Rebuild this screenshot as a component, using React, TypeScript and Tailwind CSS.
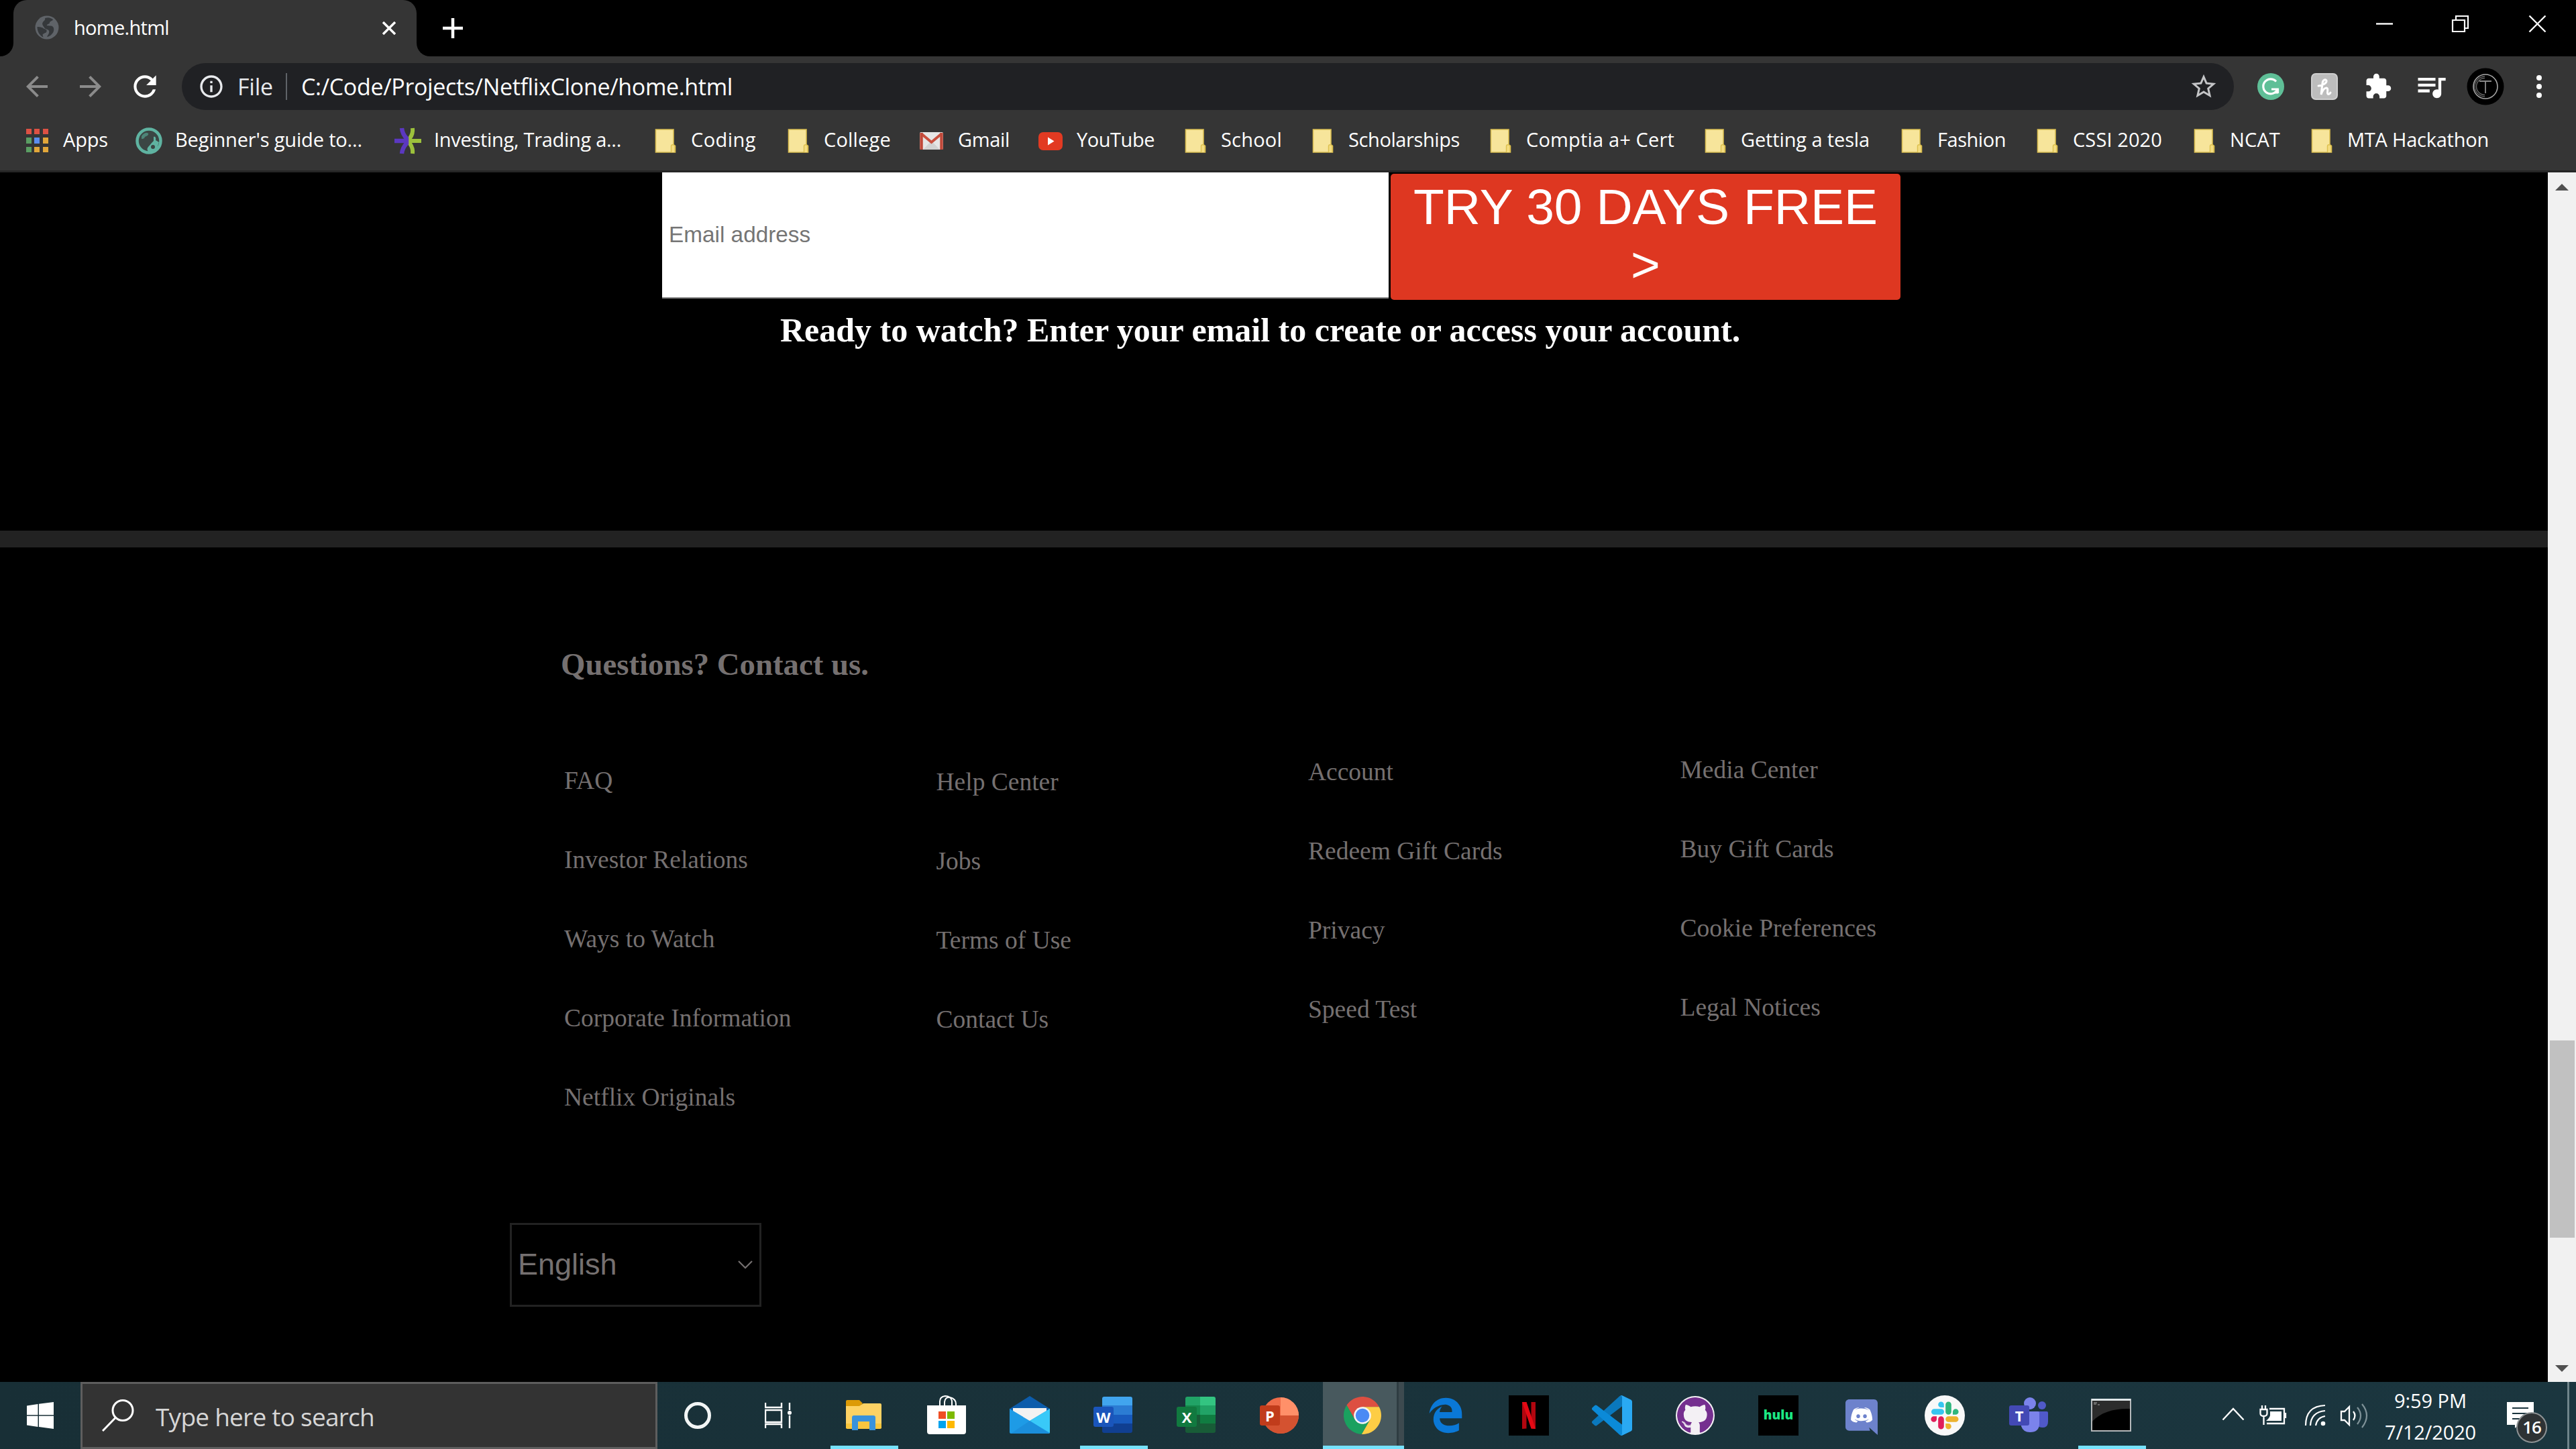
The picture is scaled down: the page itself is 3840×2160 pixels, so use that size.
import { useLayoutEffect, useRef, useState } from "react";
import type { ReactNode } from "react";
import { MdArrowBack, MdArrowForward, MdExtension, MdInfoOutline, MdQueueMusic, MdRefresh, MdStarBorder } from "react-icons/md";
import { FaEdgeLegacy, FaGithub } from "react-icons/fa6";

/** Text whose letter spacing is tuned so that it fills the given width. */
function Fit({ w, className = "", children }: { w: number; className?: string; children: string }) {
  const ref = useRef<HTMLSpanElement>(null);
  const [spacing, setSpacing] = useState(0);
  useLayoutEffect(() => {
    if (ref.current) {
      const natural = ref.current.getBoundingClientRect().width - spacing * children.length;
      setSpacing((w - natural) / children.length);
    }
  }, [w, children]);
  return (
    <span ref={ref} className={`shrink-0 whitespace-pre ${className}`} style={{ letterSpacing: `${spacing}px` }}>
      {children}
    </span>
  );
}

/* ---------- bookmark icons ---------- */

function AppsIcon() {
  const cells = ["#dd5144", "#dd5144", "#dd5144", "#5a9e63", "#5b8def", "#e2a73a", "#5a9e63", "#e2a73a", "#e2a73a"];
  return (
    <div className="grid grid-cols-3 gap-x-[4.5px] gap-y-[5px]">
      {cells.map((c, i) => (
        <div key={i} className="h-[8.5px] w-[8px]" style={{ backgroundColor: c }} />
      ))}
    </div>
  );
}

function GuideIcon() {
  return (
    <svg viewBox="0 0 40 40" className="size-10">
      <circle cx="20" cy="20" r="17.5" fill="#3b4644" stroke="#5fb3a1" strokeWidth="4.500" />
      <path d="M9 13c3-5 8-6 10-4 1 2-2 4-5 5-1 3-3 3-5 3z" fill="#4d8578" />
      <path d="M27 14c2-1 4 1 3 5l5 3-4 12-9 4c-4-2-6-6-3-9 2-2 4-5 8-9z" fill="#5fb3a1" />
      <circle cx="26" cy="29" r="3" fill="#3b4644" />
    </svg>
  );
}

function InvestIcon() {
  return (
    <svg viewBox="0 0 40 40" className="size-10">
      <path d="M40 20H26M27 1q1 8-4 15v8q5 7 4 15" fill="none" stroke="#9cc13c" strokeWidth="6" />
      <path d="M0 20h18M11 1q1 9 7 15v8q-6 6-7 15" fill="none" stroke="#5b38c0" strokeWidth="6.500" />
    </svg>
  );
}

function FolderIcon() {
  return (
    <svg viewBox="0 0 40 40" className="size-10">
      <path d="M6.500 3h26.500v23l2.500 1.500V37h-29z" fill="#f7e59b" stroke="#d9bd52" strokeWidth="1.600" />
      <path d="M29.500 37v-9.500c0-1.500 3.500-3 5.500 0V37" fill="#f4dc80" stroke="#dcc04e" strokeWidth="1.400" />
    </svg>
  );
}

function GmailIcon() {
  return (
    <svg viewBox="0 0 40 40" className="size-10">
      <rect x="2" y="7" width="35" height="26" rx="2" fill="#e6e6e6" />
      <path d="M7 33 19.500 20 32 33z" fill="#d2d2d2" />
      <path d="M4 9l15.500 13L35 9" fill="none" stroke="#c9503f" strokeWidth="4" />
      <path d="M4.500 8v25M34.500 8v25" stroke="#c0493a" strokeWidth="4.500" />
    </svg>
  );
}

function YouTubeIcon() {
  return (
    <svg viewBox="0 0 40 40" className="size-10">
      <rect x="2" y="7" width="36" height="27" rx="7" fill="#e23a22" />
      <path d="M16 14.500 25.500 20.500 16 26.500z" fill="#fff" />
    </svg>
  );
}

const bookmarks: { label: string; w: number; cell: string; icon: ReactNode }[] = [
  { label: "Apps", w: 67, cell: "w-[167px]", icon: <AppsIcon /> },
  { label: "Beginner's guide to...", w: 279, cell: "w-[386px]", icon: <GuideIcon /> },
  { label: "Investing, Trading a...", w: 279, cell: "w-[383px]", icon: <InvestIcon /> },
  { label: "Coding", w: 97, cell: "w-[198px]", icon: <FolderIcon /> },
  { label: "College", w: 100, cell: "w-[200px]", icon: <FolderIcon /> },
  { label: "Gmail", w: 77, cell: "w-[177px]", icon: <GmailIcon /> },
  { label: "YouTube", w: 116, cell: "w-[215px]", icon: <YouTubeIcon /> },
  { label: "School", w: 91, cell: "w-[190px]", icon: <FolderIcon /> },
  { label: "Scholarships", w: 166, cell: "w-[265px]", icon: <FolderIcon /> },
  { label: "Comptia a+ Cert", w: 221, cell: "w-[320px]", icon: <FolderIcon /> },
  { label: "Getting a tesla", w: 192, cell: "w-[293px]", icon: <FolderIcon /> },
  { label: "Fashion", w: 102, cell: "w-[202px]", icon: <FolderIcon /> },
  { label: "CSSI 2020", w: 133, cell: "w-[234px]", icon: <FolderIcon /> },
  { label: "NCAT", w: 75, cell: "w-[175px]", icon: <FolderIcon /> },
  { label: "MTA Hackathon", w: 211, cell: "w-[280px]", icon: <FolderIcon /> },
];

/* ---------- browser chrome ---------- */

function TabStrip() {
  return (
    <div className="flex h-[84px] bg-black">
      <div className="h-full w-5 shrink-0 self-end">
        <div className="mt-16 size-5 bg-[#353535]">
          <div className="size-5 rounded-br-[20px] bg-black" />
        </div>
      </div>
      <div className="flex h-full w-[601px] items-center rounded-t-[20px] bg-[#353535] pb-[2px]">
        <svg viewBox="0 0 36 36" className="ml-8 size-9 shrink-0">
          <circle cx="18" cy="18" r="17.500" fill="#5f6368" />
          <path
            d="M3.500 17c4 0 8 1 9 2 2 2 6 1 5 5-1 3-5 2-6 5l1 3.500C7 30 3.500 24 3.500 17zM15 4c6-2 9 0 12 2-1 3-5 2-5 5 0 2-5 2-4 4 3 1 9-1 10 4 1 4-1 8-5 11-2 1-4 2-5 2 2-4 4-6 3-9-1-3-6-2-7-5-2-3-4-5-2-8 1-2 4-3 3-6z"
            fill="#35383b"
          />
        </svg>
        <Fit w={142} className="ml-[22px] text-[29px]">home.html</Fit>
        <svg viewBox="0 0 20 20" className="mt-[2px] mr-[31px] ml-auto size-5">
          <path d="M1 1l18 18M19 1L1 19" stroke="#fff" strokeWidth="3.400" />
        </svg>
      </div>
      <div className="mt-16 size-5 bg-[#353535]">
        <div className="size-5 rounded-bl-[20px] bg-black" />
      </div>
      <svg viewBox="0 0 30 30" className="mt-[27px] ml-[19px] size-[30px]">
        <path d="M15 0v30M0 15h30" stroke="#fff" strokeWidth="4.500" />
      </svg>
      <div className="mt-[22px] mr-[44px] ml-auto flex">
        <svg viewBox="0 0 27 27" className="mr-[86px] size-[27px]">
          <path d="M1 13.500h25" stroke="#fff" strokeWidth="2.400" />
        </svg>
        <svg viewBox="0 0 27 27" className="mr-[88px] size-[27px]">
          <path d="M2 8h18v17H2zM7 8V2h18v18h-5" fill="none" stroke="#fff" strokeWidth="2.200" />
        </svg>
        <svg viewBox="0 0 27 27" className="size-[27px]">
          <path d="M1.500 1.500l24 24M25.500 1.500l-24 24" stroke="#fff" strokeWidth="2.400" />
        </svg>
      </div>
    </div>
  );
}

function Toolbar() {
  return (
    <div className="flex h-[70px] shrink-0 items-center">
      <MdArrowBack className="ml-[31px] size-12 text-[#8b8b8b]" />
      <MdArrowForward className="ml-8 size-12 text-[#8b8b8b]" />
      <MdRefresh className="ml-8 size-[50px]" />
      <div className="ml-[30px] flex h-[70px] w-[3059px] items-center rounded-full bg-[#202124]">
        <MdInfoOutline className="ml-[24px] size-[40px] text-[#e8eaed]" />
        <Fit w={53} className="ml-[19px] text-[34px] text-[#e8eaed]">File</Fit>
        <div className="ml-[19px] h-10 w-[2px] bg-[#5f6368]" />
        <Fit w={643} className="ml-[21px] text-[34px]">C:/Code/Projects/NetflixClone/home.html</Fit>
        <MdStarBorder className="mr-[23px] ml-auto size-[44px] text-[#c4c5c7]" />
      </div>
      <svg viewBox="0 0 40 40" className="ml-[35px] size-10">
        <circle cx="20" cy="20" r="20" fill="#5fbf97" />
        <path d="M28 12.500a11 11 0 1 0 2 11.500H21M30.500 24v6" fill="none" stroke="#fff" strokeWidth="3.200" />
        <path d="M22 30.500h9v-7z" fill="#fff" />
      </svg>
      <div className="ml-10 size-10 rounded-[7px] border-2 border-[#cfcfcf] bg-[#bdbdbd]">
        <svg viewBox="0 0 36 36" className="size-9">
          <path
            d="M9 17c5 0 13-4 12-8-2-3-6 0-6 5l-2 16c2-6 4-10 8-10 4 1 0 6 2 9 1 1 3 0 4-2"
            fill="none"
            stroke="#fff"
            strokeWidth="3"
            strokeLinecap="round"
          />
        </svg>
      </div>
      <MdExtension className="ml-[39px] size-[42px]" />
      <MdQueueMusic className="ml-[32px] size-[52px]" />
      <svg viewBox="0 0 56 56" className="ml-[27px] size-14">
        <circle cx="28" cy="28" r="27.500" fill="#000" />
        <circle cx="28" cy="28" r="18" fill="none" stroke="#a8a8a8" strokeWidth="1.600" />
        <path d="M27 13a15 15 0 0 0 0 30M27 15.500a12.500 12.500 0 0 0 0 25" fill="none" stroke="#666" strokeWidth="1.400" />
        <path d="M19 20h18M28 20v18" stroke="#8a8a8a" strokeWidth="1.800" />
      </svg>
      <div className="ml-[48px] flex flex-col gap-[5px]">
        <div className="size-2 rounded-full bg-white" />
        <div className="size-2 rounded-full bg-white" />
        <div className="size-2 rounded-full bg-white" />
      </div>
    </div>
  );
}

function BookmarkBar() {
  return (
    <div className="flex h-[90px] items-center border-b-[3px] border-[#262626] pb-[2px] pl-[35px]">
      {bookmarks.map((b) => (
        <div key={b.label} className={`flex shrink-0 items-center gap-[19px] ${b.cell}`}>
          <div className="flex size-10 shrink-0 items-center justify-center">{b.icon}</div>
          <Fit w={b.w} className="-mt-[3px] text-[29px]">{b.label}</Fit>
        </div>
      ))}
    </div>
  );
}

/* ---------- page ---------- */

const linkColumns = [
  { pad: "pt-[84px]", links: ["FAQ", "Investor Relations", "Ways to Watch", "Corporate Information", "Netflix Originals"] },
  { pad: "pt-[86px]", links: ["Help Center", "Jobs", "Terms of Use", "Contact Us"] },
  { pad: "pt-[71px]", links: ["Account", "Redeem Gift Cards", "Privacy", "Speed Test"] },
  { pad: "pt-[68px]", links: ["Media Center", "Buy Gift Cards", "Cookie Preferences", "Legal Notices"] },
];

function Page() {
  return (
    <main className="flex w-[3798px] flex-col bg-black font-['Liberation_Serif',serif]">
      <div className="ml-[987px] flex h-[190px] gap-[3px] font-['Liberation_Sans',sans-serif]">
        <div className="flex h-[188px] w-[1083px] items-center border-b-2 border-[#8a8a8a] bg-white pb-px pl-[10px] text-[33.33px] text-[#757575]">
          Email address
        </div>
        <button className="mt-[2px] flex h-[188px] w-[760px] flex-col items-center rounded-[5px] bg-[#de3721] pt-[6px] text-[75px] leading-[86px] text-white">
          <span>TRY 30 DAYS FREE</span>
          <span>&gt;</span>
        </button>
      </div>
      <h3 className="mt-[15px] ml-[1163px] text-[50px] leading-[60px] font-bold whitespace-nowrap text-white">
        Ready to watch? Enter your email to create or access your account.
      </h3>
      <div className="mt-[269px] h-[25px] bg-[#222222]" />
      <h3 className="mt-[144px] ml-[836px] text-[46.8px] leading-[60px] font-bold text-[#757070]">Questions? Contact us.</h3>
      <div className="mt-px ml-[841px] flex h-[700px] text-[37.5px] leading-[118px] text-[#757070]">
        {linkColumns.map((c) => (
          <ul key={c.pad} className={`w-[554.5px] ${c.pad}`}>
            {c.links.map((l) => (
              <li key={l}>{l}</li>
            ))}
          </ul>
        ))}
      </div>
      <div className="mt-[102px] ml-[760px] flex h-[125px] w-[375px] items-center justify-between border-[3px] border-[#222222] pr-[9px] pb-[2px] pl-[9px] font-['Liberation_Sans',sans-serif] text-[45px] text-[#757070]">
        English
        <svg viewBox="0 0 24 14" className="h-[14px] w-6">
          <path d="M2 2l10 10L22 2" fill="none" stroke="#757070" strokeWidth="2.200" />
        </svg>
      </div>
    </main>
  );
}

function Scrollbar() {
  return (
    <div className="flex w-[42px] flex-col items-center bg-[#f1f1f1]">
      <svg viewBox="0 0 20 10" className="mt-[17px] h-[10px] w-5">
        <path d="M0 10L10 0l10 10z" fill="#505050" />
      </svg>
      <div className="mt-[1267px] h-[294px] w-[37px] bg-[#c1c1c1]" />
      <svg viewBox="0 0 20 10" className="mt-auto mb-[15px] h-[10px] w-5">
        <path d="M0 0l10 10L20 0z" fill="#505050" />
      </svg>
    </div>
  );
}

/* ---------- taskbar icons ---------- */

function ExplorerIcon() {
  return (
    <svg viewBox="0 0 60 60" className="size-[60px]">
      <path d="M4 9q0-2 2-2h18l5 5-5 6H4z" fill="#dc9a06" />
      <path d="M4 16h20l6-4h25q2 0 2 2v35H4z" fill="#fdd264" />
      <path d="M4 42h53v6q0 2-2 2H6q-2 0-2-2z" fill="#f9c63c" />
      <path d="M13 52V33q0-3 3-3h29q3 0 3 3v19h-9V39H22v13z" fill="#3992dc" />
      <path d="M22 39h17v11H22z" fill="#f8c53e" />
    </svg>
  );
}

function StoreIcon() {
  return (
    <svg viewBox="0 0 60 60" className="size-[60px]">
      <path d="M20 16V9q0-7 8-8 8 0 10 7v8M27 16V10q1-8 8-7 9 2 9 10v3" fill="none" stroke="#fff" strokeWidth="2" />
      <path d="M1 15h58v39q0 4-4 4H5q-4 0-4-4z" fill="#fff" />
      <path d="M18 24h11v11H18z" fill="#f04e24" />
      <path d="M31 24h11v11H31z" fill="#7db900" />
      <path d="M18 38h11v11H18z" fill="#01a3ee" />
      <path d="M31 38h11v11H31z" fill="#feb800" />
    </svg>
  );
}

function MailIcon() {
  return (
    <svg viewBox="0 0 60 60" className="size-[60px]">
      <path d="M0 20L30 1l30 19v6H0z" fill="#0c5cab" />
      <path d="M5 19h50v20H5z" fill="#f2f2f2" />
      <path d="M0 20l30 18 30-18v35q0 2-2 2H2q-2 0-2-2z" fill="#1e9be6" />
      <path d="M60 20L30 38l30 18z" fill="#39c9f8" />
      <path d="M30 38l30 19H2z" fill="#1b8edb" />
    </svg>
  );
}

/** Office tile: stacked bands with a letter plate in front. */
function OfficeIcon({ letter, bands, plate }: { letter: string; bands: string[]; plate: string }) {
  return (
    <div className="relative size-[60px]">
      <div className="mt-[3px] ml-[14px] grid h-[54px] w-[45px] grid-rows-4 overflow-hidden rounded-[3px]">
        {bands.map((b) => (
          <div key={b} style={{ background: b }} />
        ))}
      </div>
      <div
        className="absolute top-[15px] left-[1px] flex h-[30px] w-[30px] items-center justify-center rounded-[3px] font-['Open_Sans',sans-serif] text-[22px] leading-none font-bold text-white"
        style={{ backgroundColor: plate }}
      >
        {letter}
      </div>
    </div>
  );
}

function PowerPointIcon() {
  return (
    <div className="relative size-[60px]">
      <svg viewBox="0 0 60 60" className="size-[60px]">
        <circle cx="32" cy="30" r="27" fill="#ee6c49" />
        <path d="M32 3a27 27 0 0 1 27 27H32z" fill="#ff9069" />
        <path d="M5 30h54a27 27 0 0 1-54 0z" fill="#d45230" />
      </svg>
      <div className="absolute top-[15px] left-[1px] flex size-[30px] items-center justify-center rounded-[3px] bg-[#c13c1b] font-['Open_Sans',sans-serif] text-[22px] leading-none font-bold text-white">
        P
      </div>
    </div>
  );
}

function ChromeIcon() {
  return (
    <svg viewBox="0 0 48 48" className="size-[56px]">
      <path d="M24 13H45.300A24 24 0 0 0 3.800 11L14.500 29.500 24 24z" fill="#dd4f41" />
      <path d="M33.500 29.500L22.900 48A24 24 0 0 0 45.300 13H24v11z" fill="#fdcd45" />
      <path d="M14.500 29.500L3.800 11A24 24 0 0 0 22.900 48L33.500 29.500 24 24z" fill="#1aa15f" />
      <circle cx="24" cy="24" r="11" fill="#f4f4f4" />
      <circle cx="24" cy="24" r="8.800" fill="#4a8af4" />
    </svg>
  );
}

function NetflixIcon() {
  return (
    <div className="flex size-[60px] items-center justify-center bg-black">
      <svg viewBox="0 0 20 40" className="h-10 w-5">
        <path d="M0 0h6.500v39.500L0 40zM13.500 0H20v40l-6.500-.500z" fill="#b1060f" />
        <path d="M0 0h6.500L20 40l-6.500-.600z" fill="#e50914" />
      </svg>
    </div>
  );
}

function VSCodeIcon() {
  return (
    <svg viewBox="0 0 100 100" className="size-[60px]">
      <path
        d="M96.461 10.796L75.857.876C73.472-.273 70.622.212 68.750 2.083L1.299 63.583c-1.815 1.654-1.813 4.511.004 6.162l5.510 5.009c1.485 1.350 3.722 1.450 5.321.237L93.361 13.370C96.086 11.303 100 13.246 100 16.667v-.240c0-2.400-1.375-4.589-3.539-5.631z"
        fill="#0a78bd"
      />
      <path
        d="M96.461 89.204L75.857 99.125c-2.385 1.148-5.235.663-7.107-1.208L1.299 36.417c-1.815-1.654-1.813-4.511.004-6.162l5.510-5.009c1.485-1.350 3.722-1.450 5.321-.237L93.361 86.630C96.086 88.697 100 86.754 100 83.333v.240c0 2.400-1.375 4.589-3.539 5.631z"
        fill="#0b8ad8"
      />
      <path
        d="M75.858 99.126c-2.386 1.148-5.236.662-7.108-1.209 2.306 2.306 6.250.673 6.250-2.589V4.672c0-3.262-3.944-4.895-6.250-2.589 1.872-1.872 4.722-2.357 7.108-1.209l20.601 9.907C98.623 11.822 100 14.011 100 16.413v67.174c0 2.402-1.377 4.592-3.541 5.633z"
        fill="#2aa9f3"
      />
    </svg>
  );
}

function GitHubIcon() {
  return (
    <div className="flex size-[58px] items-center justify-center rounded-full bg-[#f3f0f4]">
      <div className="flex size-[54px] items-center justify-center overflow-hidden rounded-full bg-[#f3f0f4]">
        <FaGithub className="size-[56px] shrink-0 text-[#752f8f]" />
      </div>
    </div>
  );
}

function DiscordIcon() {
  return (
    <svg viewBox="0 0 448 512" className="mt-1 h-[53px] w-[48px]" preserveAspectRatio="none">
      <rect x="60" y="100" width="330" height="250" fill="#fff" />
      <path
        d="M297.216 243.200c0 15.616-11.520 28.416-26.112 28.416-14.336 0-26.112-12.800-26.112-28.416s11.520-28.416 26.112-28.416c14.592 0 26.112 12.800 26.112 28.416zm-119.552-28.416c-14.592 0-26.112 12.800-26.112 28.416s11.776 28.416 26.112 28.416c14.592 0 26.112-12.800 26.112-28.416.256-15.616-11.520-28.416-26.112-28.416zM448 52.736V512c-64.494-56.994-43.868-38.128-118.784-107.776l13.568 47.360H52.480C23.552 451.584 0 428.032 0 398.848V52.736C0 23.552 23.552 0 52.480 0h343.040C424.448 0 448 23.552 448 52.736zm-72.960 242.688c0-82.432-36.864-149.248-36.864-149.248-36.864-27.648-71.936-26.880-71.936-26.880l-3.584 4.096c43.520 13.312 63.744 32.512 63.744 32.512-60.811-33.329-132.244-33.335-191.232-7.424-9.472 4.352-15.104 7.424-15.104 7.424s21.248-20.224 67.328-33.536l-2.560-3.072s-35.072-.768-71.936 26.880c0 0-36.864 66.816-36.864 149.248 0 0 21.504 37.120 78.080 38.912 0 0 9.472-11.520 17.152-21.248-32.512-9.728-44.800-30.208-44.800-30.208 3.766 2.636 9.976 6.053 10.496 6.400 43.210 24.198 104.588 32.126 159.744 8.960 8.960-3.328 18.944-8.192 29.440-15.104 0 0-12.800 20.992-46.336 30.464 7.680 9.728 16.896 20.736 16.896 20.736 56.576-1.792 78.336-38.912 78.336-38.912z"
        fill="#6d82cc"
      />
    </svg>
  );
}

function SlackIcon() {
  return (
    <svg viewBox="0 0 60 60" className="size-[60px]">
      <circle cx="30" cy="30" r="30" fill="#f8f8f8" />
      <path d="M10 24.500a4.300 4.300 0 0 1 4.300-4.300h10.400a4.300 4.300 0 0 1 0 8.600H14.300a4.300 4.300 0 0 1-4.300-4.300zM28.800 18h-4.300a4.300 4.300 0 1 1 4.300-4.300z" fill="#36c5f0" />
      <path d="M35.500 9.500a4.300 4.300 0 0 1 4.300 4.300v10.700a4.300 4.300 0 0 1-8.600 0V13.800a4.300 4.300 0 0 1 4.300-4.300zM42 28.800v-4.300a4.300 4.300 0 1 1 4.300 4.300z" fill="#2eb67d" />
      <path d="M50.500 35.500a4.300 4.300 0 0 1-4.300 4.300H35.500a4.300 4.300 0 0 1 0-8.600h10.700a4.300 4.300 0 0 1 4.300 4.300zM31.200 42h4.300a4.300 4.300 0 1 1-4.300 4.300z" fill="#ecb22e" />
      <path d="M24.500 50.500a4.300 4.300 0 0 1-4.300-4.300V35.500a4.300 4.300 0 0 1 8.600 0v10.700a4.300 4.300 0 0 1-4.300 4.300zM18 31.200v4.300a4.300 4.300 0 1 1-4.300-4.300z" fill="#e01e5a" />
    </svg>
  );
}

function TeamsIcon() {
  return (
    <div className="relative size-[60px]">
      <svg viewBox="0 0 60 60" className="size-[60px]">
        <circle cx="51" cy="15" r="6" fill="#5059c9" />
        <path d="M42 24h16q2 0 2 2v13q0 9-8 9-6 0-10-4z" fill="#5059c9" />
        <circle cx="33" cy="12" r="9" fill="#7b83eb" />
        <path d="M20 24h25q2 0 2 2v16q0 13-14 13-10 0-13-9z" fill="#7b83eb" />
      </svg>
      <div className="absolute top-[15px] left-[2px] flex size-[30px] items-center justify-center rounded-[3px] bg-[#4349b5] font-['Open_Sans',sans-serif] text-[22px] leading-none font-bold text-white">
        T
      </div>
    </div>
  );
}

function TerminalIcon() {
  return (
    <svg viewBox="0 0 60 50" className="h-[50px] w-[60px]">
      <rect x="1" y="1" width="58" height="47" fill="#000" stroke="#b4b8ba" strokeWidth="2" />
      <path d="M2 3h56v12C36 14 14 20 2 34z" fill="#2c2c2c" />
      <path d="M1 0h58v3H1z" fill="#dfe6e8" />
      <path d="M4 6h5M4 8h4M10 9h3" stroke="#aaa" strokeWidth="1.200" />
    </svg>
  );
}

const tasks: { id: string; icon: ReactNode; running?: boolean; active?: boolean }[] = [
  { id: "explorer", icon: <ExplorerIcon />, running: true },
  { id: "store", icon: <StoreIcon /> },
  { id: "mail", icon: <MailIcon /> },
  { id: "word", icon: <OfficeIcon letter="W" plate="#1a55bb" bands={["#41a5ee", "#2b7cd3", "#185abd", "#103f91"]} />, running: true },
  {
    id: "excel",
    icon: (
      <OfficeIcon
        letter="X"
        plate="#11793f"
        bands={[
          "linear-gradient(90deg,#21a366 50%,#33c481 50%)",
          "linear-gradient(90deg,#15894d 50%,#21a366 50%)",
          "linear-gradient(90deg,#185c37 50%,#107c41 50%)",
          "#185c37",
        ]}
      />
    ),
  },
  { id: "powerpoint", icon: <PowerPointIcon /> },
  { id: "chrome", icon: <ChromeIcon />, running: true, active: true },
  { id: "edge", icon: <FaEdgeLegacy className="size-[54px] text-[#0a78d7]" /> },
  { id: "netflix", icon: <NetflixIcon /> },
  { id: "vscode", icon: <VSCodeIcon /> },
  { id: "github", icon: <GitHubIcon /> },
  {
    id: "hulu",
    icon: (
      <div className="flex size-[60px] items-center justify-center bg-black pb-[2px] font-['Open_Sans',sans-serif] text-[19px] font-extrabold text-[#1ce783]">hulu</div>
    ),
  },
  { id: "discord", icon: <DiscordIcon /> },
  { id: "slack", icon: <SlackIcon /> },
  { id: "teams", icon: <TeamsIcon /> },
  { id: "terminal", icon: <TerminalIcon />, running: true },
];

function Taskbar() {
  return (
    <div className="flex h-[100px] w-full items-center bg-linear-to-r from-[#182f36] to-[#1b363f]">
      <div className="flex w-[120px] shrink-0 justify-center">
        <svg viewBox="0 0 40 40" className="size-10">
          <path d="M0 5.500L16.500 3v16.200H0zM18 2.800L40 0v19.200H18zM0 20.800h16.500V37L0 34.500zM18 20.800h22V40l-22-3z" fill="#fff" />
        </svg>
      </div>
      <div className="flex h-full w-[860px] shrink-0 items-center border-[3px] border-[#5e5e5e] bg-[#333333]">
        <svg viewBox="0 0 48 48" className="ml-[29px] size-12">
          <circle cx="31" cy="16.500" r="15" fill="none" stroke="#fff" strokeWidth="3" />
          <path d="M20.500 27L1 47" stroke="#fff" strokeWidth="3" />
        </svg>
        <Fit w={326} className="mt-1 ml-8 text-[37px] text-[#d6d6d6]">Type here to search</Fit>
      </div>
      <div className="flex w-[245px] shrink-0 items-center">
        <div className="ml-10 size-10 rounded-full border-[5px] border-[#f2f5f5]" />
        <svg viewBox="0 0 40 40" className="ml-20 size-10">
          <path d="M1 1v7h24V1M1 12h24v18H1zM1 39v-6h24v6M37 1v11M37 20v19" fill="none" stroke="#fff" strokeWidth="2.400" />
          <circle cx="37" cy="16" r="3" fill="#fff" />
        </svg>
      </div>
      {tasks.map((t) => (
        <div key={t.id} className="relative flex h-full w-[124px] shrink-0 items-center justify-center">
          {t.active && (
            <div className="absolute top-0 left-[3px] flex h-full w-[121px]">
              <div className="w-[110px] bg-[#48595e]" />
              <div className="w-[3px] bg-[#2f3d42]" />
              <div className="grow bg-[#3d4a4f]" />
            </div>
          )}
          <div className="relative">{t.icon}</div>
          {t.running && (
            <div className={`absolute bottom-0 h-[5px] bg-[#76e2fd] ${t.active ? "left-[3px] w-[121px]" : "left-[13px] w-[101px]"}`} />
          )}
        </div>
      ))}
      <svg viewBox="0 0 34 20" className="mt-[-4px] ml-[103px] h-5 w-[34px] shrink-0">
        <path d="M1.500 18.500L17 2l15.500 16.500" fill="none" stroke="#fff" strokeWidth="2.400" />
      </svg>
      <svg viewBox="0 0 42 34" className="ml-[22px] h-[34px] w-[42px] shrink-0">
        <path d="M4 2v6M9 2v6M1.500 8h10v6q0 4-5 4-5 0-5-4zM6.500 18v13M15 7h22v22H11M39 13v8" fill="none" stroke="#fff" strokeWidth="2.300" />
        <path d="M16 11h17v14H10q5-4 6-8z" fill="#fff" />
      </svg>
      <svg viewBox="0 0 34 34" className="ml-[25px] size-[34px] shrink-0">
        <path d="M2 32Q2 3 31 2M9 32Q10 12 31 10M17 32Q19 20 31 18" fill="none" stroke="#fff" strokeWidth="2.200" />
        <circle cx="28" cy="29" r="3.300" fill="#fff" />
      </svg>
      <svg viewBox="0 0 42 38" className="ml-[19px] h-[38px] w-[42px] shrink-0">
        <path d="M2 13h5l7-7v27l-7-7H2z" fill="none" stroke="#fff" strokeWidth="2.300" />
        <path d="M20 13q5 6 0 13" fill="none" stroke="#fff" strokeWidth="2.200" />
        <path d="M26 7q10 12 0 25M33 2q14 17 0 35" fill="none" stroke="#7f9298" strokeWidth="2.200" />
      </svg>
      <div className="mt-[2px] ml-[15px] flex w-[156px] shrink-0 flex-col items-center text-[29px] leading-[47px]">
        <Fit w={108}>9:59 PM</Fit>
        <Fit w={136}>7/12/2020</Fit>
      </div>
      <div className="relative ml-[36px] h-[66px] w-[62px] shrink-0">
        <svg viewBox="0 0 40 40" className="mt-[13px] size-10">
          <path d="M0 0h40v34H17l-5 5v-5H0z" fill="#fff" />
          <path d="M8 9h24M8 17h24M8 25h16" stroke="#1b343d" strokeWidth="2.200" />
        </svg>
        <div className="absolute top-[28px] left-[14px] flex size-[46px] items-center justify-center rounded-full border-2 border-[#8d9294] bg-[#2e3234] pb-[3px] text-[26px] leading-none font-semibold tracking-[-1px]">
          16
        </div>
      </div>
      <div className="ml-[28px] h-full w-[3px] bg-[#6f858b]" />
    </div>
  );
}

export default function App() {
  return (
    <div className="flex h-[2160px] w-[3840px] flex-col overflow-hidden bg-black font-['Open_Sans','Noto_Sans',sans-serif] text-white">
      <TabStrip />
      <div className="flex h-[173px] flex-col bg-[#353535] pt-[10px]">
        <Toolbar />
        <div className="mt-[3px]">
          <BookmarkBar />
        </div>
      </div>
      <div className="flex h-[1803px]">
        <Page />
        <Scrollbar />
      </div>
      <Taskbar />
    </div>
  );
}
